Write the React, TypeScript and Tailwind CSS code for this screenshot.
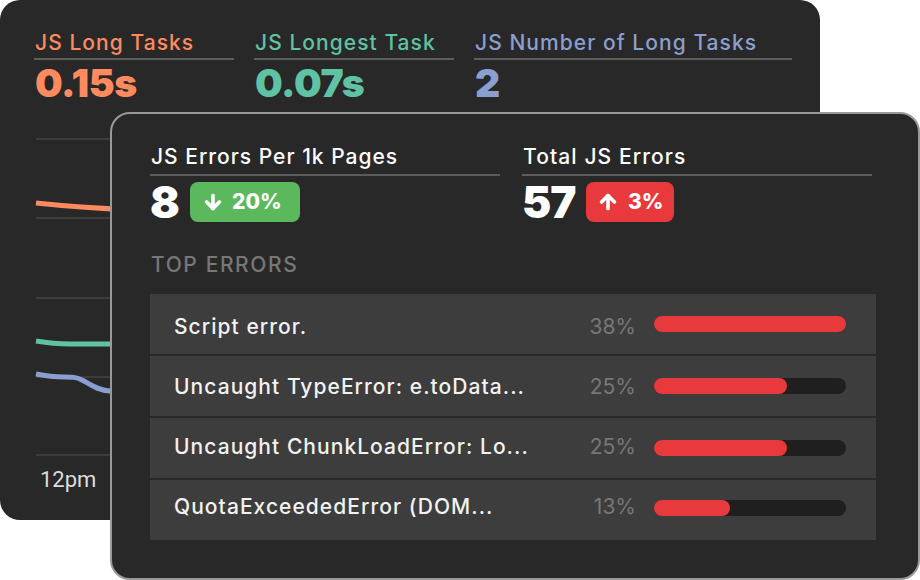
import { ArrowDown, ArrowUp } from "lucide-react";

const metrics = [
  { title: "JS Long Tasks", value: "0.15s", color: "text-[#ff8a60]", width: "w-[200px]" },
  { title: "JS Longest Task", value: "0.07s", color: "text-[#5fc2a3]", width: "w-[200px]" },
  { title: "JS Number of Long Tasks", value: "2", color: "text-[#8a9fcf]", width: "w-[318px]" },
];

const errors = [
  { name: "Script error.", pct: "38%", bar: "w-[192px]", nudge: "pt-[6px]", barNudge: "" },
  { name: "Uncaught TypeError: e.toData...", pct: "25%", bar: "w-[133px]", nudge: "pt-[2px]", barNudge: "" },
  { name: "Uncaught ChunkLoadError: Lo...", pct: "25%", bar: "w-[133px]", nudge: "pb-[2px]", barNudge: "" },
  { name: "QuotaExceededError (DOM...", pct: "13%", bar: "w-[76px]", nudge: "pb-[6px]", barNudge: "mb-[4px]" },
];

function Chart() {
  return (
    <svg width="786" height="330" viewBox="0 0 786 330" fill="none" className="block">
      {[1, 80, 160, 239, 317].map((y) => (
        <line key={y} x1="2" x2="786" y1={y} y2={y} stroke="#3c3c3c" strokeWidth="2" />
      ))}
      <path d="M2 65 C30 68 55 70 100 72" stroke="#ff8a60" strokeWidth="5" />
      <path d="M2 203 C14 205 22 206 36 206 L100 206" stroke="#5fc2a3" strokeWidth="5" />
      <path d="M2 236 C12 238 20 239 30 239 C38 239 42 239 48 242 C56 246 62 252 76 253 L100 253" stroke="#8a9fcf" strokeWidth="5" />
    </svg>
  );
}

export default function App() {
  return (
    <div className="relative w-[920px] h-[580px] bg-white overflow-hidden font-['Inter',sans-serif]">
      <div className="w-[820px] h-[520px] rounded-[20px] bg-[#282828] pt-[28px] pl-[34px]">
        <div className="flex gap-5">
          {metrics.map((m) => (
            <div key={m.title} className={m.width}>
              <div className={`${m.color} border-b-2 border-[#5c5c5c] pl-px text-[21px] leading-[29px] h-[32px] font-medium tracking-[1.05px]`}>
                {m.title}
              </div>
              <div className={`${m.color} pl-px text-[39px] leading-[46px] font-black tracking-[-0.4px]`}>{m.value}</div>
            </div>
          ))}
        </div>
        <div className="mt-[32px]">
          <Chart />
        </div>
      </div>
      <div className="absolute left-[40px] top-[466px] text-[22px] leading-[28px] text-[#dddddd] font-['Roboto',sans-serif]">12pm</div>

      <div className="absolute left-[110px] top-[112px] w-[810px] h-[468px] rounded-[20px] border-2 border-[#999999] bg-[#282828] pt-[28px] pl-[38px]">
        <div className="flex gap-[22px]">
          <div className="w-[350px]">
            <div className="h-[34px] border-b-2 border-[#5c5c5c] pl-px text-[21px] leading-[30px] font-medium text-white tracking-[1px]">
              JS Errors Per 1k Pages
            </div>
            <div className="flex items-center mt-[6px]">
              <span className="w-[40px] text-[44px] leading-[40px] font-black text-white tracking-[-1px]">8</span>
              <span className="flex items-center gap-[8px] h-[40px] w-[110px] pl-[12px] rounded-[8px] bg-[#5cb85c] text-white text-[21px] font-extrabold">
                <ArrowDown size={22} strokeWidth={4} />
                20%
              </span>
            </div>
          </div>
          <div className="w-[350px]">
            <div className="h-[34px] border-b-2 border-[#5c5c5c] pl-px text-[21px] leading-[30px] font-medium text-white tracking-[1.1px]">
              Total JS Errors
            </div>
            <div className="flex items-center mt-[6px]">
              <span className="w-[64px] text-[44px] leading-[40px] font-black text-white tracking-[-1px]">57</span>
              <span className="flex items-center gap-[9px] h-[40px] w-[88px] pl-[11px] rounded-[8px] bg-[#e8393c] text-white text-[21px] font-extrabold">
                <ArrowUp size={22} strokeWidth={4} />
                3%
              </span>
            </div>
          </div>
        </div>
        <div className="mt-[28px] pl-px text-[21px] leading-[30px] font-medium text-[#777777] tracking-[1.6px]">TOP ERRORS</div>
        <div className="mt-[14px] w-[726px] flex flex-col gap-[2px]">
          {errors.map((e) => (
            <div key={e.name} className="flex items-center h-[60px] bg-[#3d3d3d] pl-6">
              <div className={`${e.nudge} flex-1 text-[21px] font-medium text-[#f2f2f2] tracking-[1.05px] whitespace-nowrap`}>{e.name}</div>
              <div className={`${e.nudge} text-[21px] text-[#777777] text-right`}>{e.pct}</div>
              <div className={`${e.barNudge} ml-[18px] mr-[30px] w-[192px] h-4 rounded-full bg-[#1f1f1f]`}>
                <div className={`${e.bar} h-4 rounded-full bg-[#e8393c]`} />
              </div>
            </div>
          ))}
        </div>
      </div>
    </div>
  );
}
